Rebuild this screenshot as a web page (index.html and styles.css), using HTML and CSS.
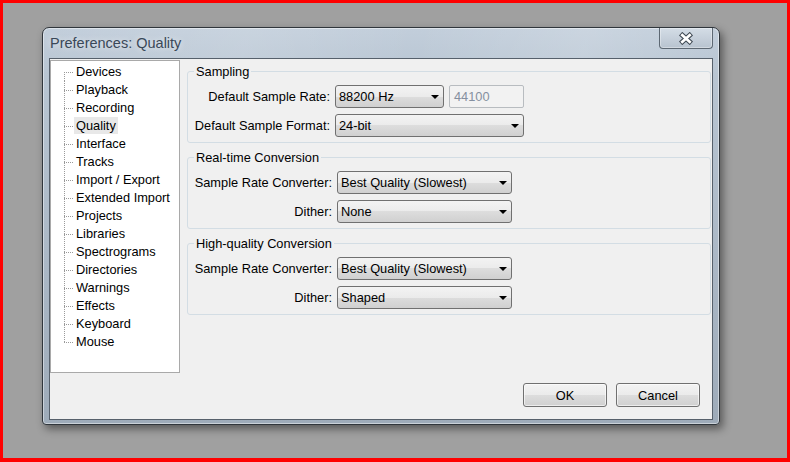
FILE: index.html
```html
<!DOCTYPE html>
<html>
<head>
<meta charset="utf-8">
<title>Preferences: Quality</title>
<link rel="stylesheet" href="styles.css">
</head>
<body>
<div class="screen">
  <div class="window">
    <div class="titlebar">
      <span class="title">Preferences: Quality</span>
      <div class="close">
        <svg width="16" height="13" viewBox="0 0 16 13">
          <path d="M2.6 1.6 L13.4 11.4 M13.4 1.6 L2.6 11.4" stroke="#3e4852" stroke-width="4.8" stroke-linecap="butt" fill="none"/>
          <path d="M3.3 2.3 L12.7 10.7 M12.7 2.3 L3.3 10.7" stroke="#ffffff" stroke-width="2.8" stroke-linecap="butt" fill="none"/>
        </svg>
      </div>
    </div>
    <div class="client">
      <div class="main">
        <ul class="tree">
          <li class="first">Devices</li>
          <li>Playback</li>
          <li>Recording</li>
          <li class="sel"><span>Quality</span></li>
          <li>Interface</li>
          <li>Tracks</li>
          <li>Import / Export</li>
          <li>Extended Import</li>
          <li>Projects</li>
          <li>Libraries</li>
          <li>Spectrograms</li>
          <li>Directories</li>
          <li>Warnings</li>
          <li>Effects</li>
          <li>Keyboard</li>
          <li class="last">Mouse</li>
        </ul>
        <div class="panel">
          <fieldset class="group">
            <legend>Sampling</legend>
            <div class="rows rows-sampling">
              <span class="lbl">Default Sample Rate:</span>
              <div class="ctrls">
                <div class="combo w-rate"><span>88200 Hz</span><i class="arrow"></i></div>
                <div class="field">44100</div>
              </div>
              <span class="lbl">Default Sample Format:</span>
              <div class="combo w-format"><span>24-bit</span><i class="arrow"></i></div>
            </div>
          </fieldset>
          <fieldset class="group">
            <legend>Real-time Conversion</legend>
            <div class="rows rows-conv">
              <span class="lbl">Sample Rate Converter:</span>
              <div class="combo w-conv"><span>Best Quality (Slowest)</span><i class="arrow"></i></div>
              <span class="lbl">Dither:</span>
              <div class="combo w-conv"><span>None</span><i class="arrow"></i></div>
            </div>
          </fieldset>
          <fieldset class="group">
            <legend>High-quality Conversion</legend>
            <div class="rows rows-conv">
              <span class="lbl">Sample Rate Converter:</span>
              <div class="combo w-conv"><span>Best Quality (Slowest)</span><i class="arrow"></i></div>
              <span class="lbl">Dither:</span>
              <div class="combo w-conv"><span>Shaped</span><i class="arrow"></i></div>
            </div>
          </fieldset>
        </div>
      </div>
      <div class="footer">
        <div class="btn">OK</div>
        <div class="btn">Cancel</div>
      </div>
    </div>
  </div>
</div>
</body>
</html>
```
FILE: styles.css
```css
html, body {
  margin: 0;
  padding: 0;
}
body {
  font-family: "Liberation Sans", Arial, sans-serif;
  font-size: 12.8px;
  color: #000;
}
.screen {
  width: 790px;
  height: 462px;
  box-sizing: border-box;
  border: 3px solid #ff0000;
  border-bottom-width: 4px;
  background: #a0a0a0;
  padding: 24px 0 0 39px;
  overflow: hidden;
}
.window {
  width: 678px;
  height: 398px;
  box-sizing: border-box;
  border: 1px solid #30363c;
  border-radius: 7px 7px 4px 4px;
  background: linear-gradient(180deg, #c2cedb 0%, #b8c5d2 12%, #aab7c5 60%, #9eabb9 100%);
  box-shadow: 3px 4px 9px rgba(0, 0, 0, 0.45), inset 0 0 0 1px rgba(255, 255, 255, 0.45);
  padding: 0 6px 4px;
  display: flex;
  flex-direction: column;
}
.titlebar {
  height: 30px;
  display: flex;
  align-items: flex-start;
  background: linear-gradient(100deg, rgba(255,255,255,0) 0%, rgba(255,255,255,0.12) 30%, rgba(255,255,255,0) 55%, rgba(255,255,255,0.15) 80%, rgba(255,255,255,0) 100%);
  margin: 0 -6px;
  padding: 0 6px;
}
.title {
  padding-left: 1px;
  font-size: 14.5px;
  line-height: 30px;
  color: #3a4858;
  text-shadow: 0 0 6px rgba(255, 255, 255, 0.7);
}
.close {
  margin-left: auto;
  width: 54px;
  height: 21px;
  box-sizing: border-box;
  border: 1px solid #5d6873;
  border-top: none;
  border-radius: 0 0 4px 4px;
  background: linear-gradient(180deg, #d4dde6 0%, #c6d0db 50%, #b7c3cf 100%);
  box-shadow: inset 0 0 0 1px rgba(255, 255, 255, 0.35);
  display: flex;
  align-items: center;
  justify-content: center;
}
.close svg {
  display: block;
}
.client {
  height: 362px;
  box-sizing: border-box;
  border: 1px solid #56606b;
  background: #f0f0f0;
  display: flex;
  flex-direction: column;
}
.main {
  display: flex;
  align-items: flex-start;
  padding-top: 1px;
}
.tree {
  width: 130px;
  height: 313px;
  box-sizing: border-box;
  border: 1px solid #a9a9a9;
  background: #ffffff;
  margin: 0;
  padding: 2px 0 0;
  list-style: none;
}
.tree li {
  height: 18px;
  line-height: 18px;
  padding-left: 25px;
  white-space: nowrap;
  background-image:
    repeating-linear-gradient(to right, #9a9a9a 0 1px, transparent 1px 2px),
    repeating-linear-gradient(to bottom, #9a9a9a 0 1px, transparent 1px 2px);
  background-repeat: no-repeat;
  background-position: 13px 9px, 13px 0;
  background-size: 10px 1px, 1px 18px;
}
.tree li.first {
  background-position: 13px 9px, 13px 9px;
  background-size: 10px 1px, 1px 9px;
}
.tree li.last {
  background-size: 10px 1px, 1px 10px;
}
.tree li.sel span {
  background: #e8e8e8;
  padding: 0 2px;
  margin-left: -2px;
  display: inline-block;
  height: 17px;
  line-height: 17px;
}
.panel {
  width: 524px;
  margin-left: 7px;
  margin-top: 4px;
  display: flex;
  flex-direction: column;
  gap: 7px;
}
.group {
  margin: 0;
  min-width: 0;
  border: 1px solid #d3dde4;
  border-radius: 3px;
  padding: 6px 7px 5px 6px;
}
.group legend {
  padding: 0 2px;
  line-height: 15px;
}
.rows {
  display: grid;
  column-gap: 5px;
  row-gap: 6px;
  align-items: center;
  justify-items: start;
  margin-left: 1px;
}
.rows-sampling {
  grid-template-columns: 135px auto;
}
.rows-conv {
  grid-template-columns: 137px auto;
}
.lbl {
  justify-self: end;
  white-space: nowrap;
  line-height: 15px;
}
.ctrls {
  display: flex;
  gap: 5px;
}
.combo {
  height: 23px;
  box-sizing: border-box;
  border: 1px solid #707070;
  border-radius: 3px;
  background: linear-gradient(180deg, #f3f3f3 0%, #ebebeb 50%, #dddddd 50%, #d0d0d0 100%);
  display: flex;
  align-items: center;
  padding: 0 4px 0 3px;
  white-space: nowrap;
}
.w-rate { width: 109px; }
.w-format { width: 189px; }
.w-conv { width: 175px; }
.arrow {
  margin-left: auto;
  width: 0;
  height: 0;
  border-left: 4px solid transparent;
  border-right: 4px solid transparent;
  border-top: 4px solid #000;
  margin-top: 1px;
}
.field {
  width: 75px;
  height: 23px;
  box-sizing: border-box;
  border: 1px solid #b8bcc0;
  border-radius: 2px;
  background: #f2f2f2;
  color: #8590a0;
  padding-left: 4px;
  display: flex;
  align-items: center;
}
.footer {
  margin-top: auto;
  display: flex;
  justify-content: flex-end;
  gap: 9px;
  padding: 0 12px 12px 0;
}
.btn {
  width: 84px;
  height: 24px;
  box-sizing: border-box;
  border: 1px solid #707070;
  border-radius: 3px;
  background: linear-gradient(180deg, #f3f3f3 0%, #ebebeb 50%, #dddddd 50%, #d0d0d0 100%);
  box-shadow: inset 0 0 0 1px rgba(255, 255, 255, 0.6);
  display: flex;
  align-items: center;
  justify-content: center;
}
```
